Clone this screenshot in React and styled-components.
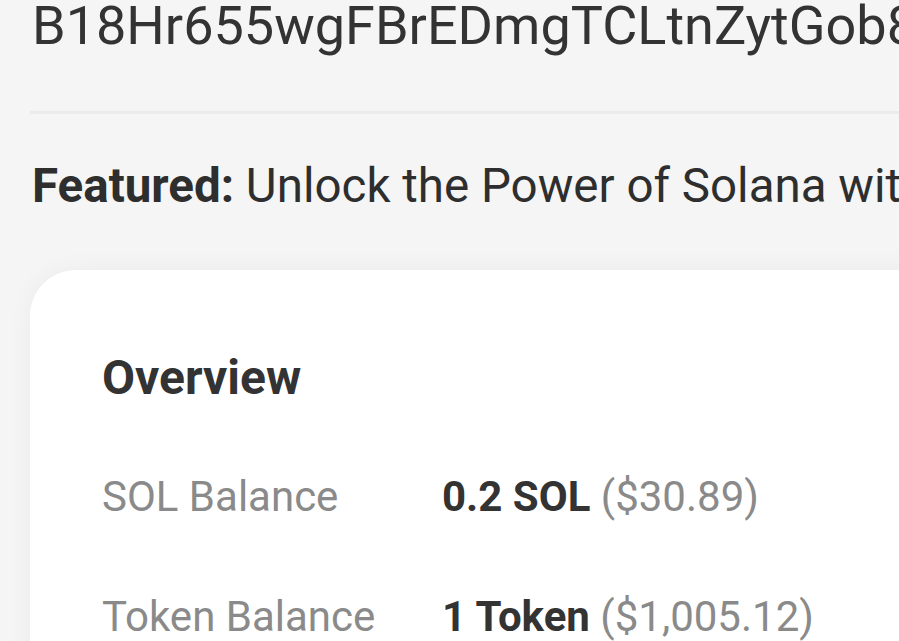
import React from "react";
import styled, { createGlobalStyle } from "styled-components";

const Global = createGlobalStyle`
  html, body {
    margin: 0;
    padding: 0;
    background: #f5f5f5;
    overflow: hidden;
  }
  body {
    font-family: Roboto, "Liberation Sans", Arial, sans-serif;
    color: #333333;
  }
`;

const Page = styled.main`
  width: 1300px;
  padding: 1px 0 0 30px;
  box-sizing: border-box;
`;

const Address = styled.h1`
  margin: 0 0 60px 2px;
  font-size: 54px;
  line-height: 50px;
  font-weight: 400;
  color: #333333;
  white-space: nowrap;
`;

const Divider = styled.hr`
  margin: 0 0 44px 0;
  border: 0;
  height: 3px;
  background: #ebebeb;
`;

const Featured = styled.p`
  margin: 0 0 56px 2px;
  font-size: 47.5px;
  line-height: 56px;
  color: #2e2e2e;
  white-space: nowrap;
  strong {
    font-weight: 700;
  }
`;

const Card = styled.section`
  background: #ffffff;
  border-radius: 46px;
  box-shadow: 0 0 26px rgba(0, 0, 0, 0.045);
  padding: 80px 72px 80px 72px;
  min-height: 500px;
`;

const CardTitle = styled.h2`
  margin: 0 0 67px 0;
  font-size: 48px;
  line-height: 56px;
  font-weight: 700;
  color: #333333;
`;

const Rows = styled.dl`
  margin: 0;
  display: grid;
  grid-template-columns: 340px 1fr;
  row-gap: 72px;
  font-size: 42px;
  line-height: 48px;
`;

const Label = styled.dt`
  margin: 0;
  color: #8a8a8a;
  white-space: nowrap;
`;

const Value = styled.dd`
  margin: 0;
  white-space: nowrap;
  color: #8a8a8a;
  strong {
    color: #333333;
    font-weight: 700;
  }
`;

const rows = [
  { label: "SOL Balance", amount: "0.2 SOL", usd: "($30.89)" },
  { label: "Token Balance", amount: "1 Token", usd: "($1,005.12)" },
];

export default function App() {
  return (
    <>
      <Global />
      <Page>
        <Address>B18Hr655wgFBrEDmgTCLtnZytGob8</Address>
        <Divider />
        <Featured>
          <strong>Featured:</strong> Unlock the Power of Solana with
        </Featured>
        <Card>
          <CardTitle>Overview</CardTitle>
          <Rows>
            {rows.map((r) => (
              <React.Fragment key={r.label}>
                <Label>{r.label}</Label>
                <Value>
                  <strong>{r.amount}</strong> {r.usd}
                </Value>
              </React.Fragment>
            ))}
          </Rows>
        </Card>
      </Page>
    </>
  );
}
